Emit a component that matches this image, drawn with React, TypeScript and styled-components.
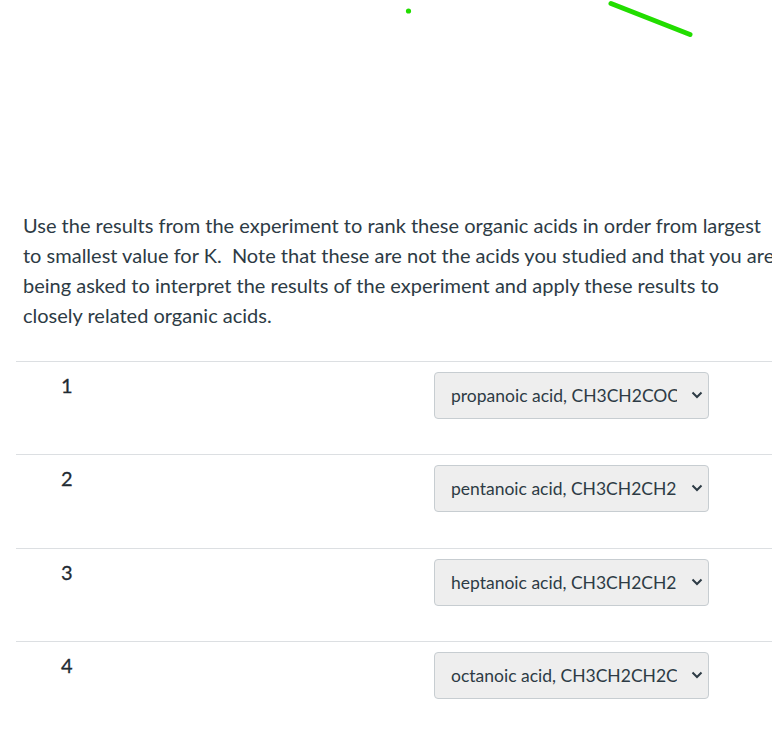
import styled, { createGlobalStyle } from "styled-components";

const GlobalStyle = createGlobalStyle`
  html, body {
    margin: 0;
    padding: 0;
    background: #ffffff;
  }
  body {
    font-family: Lato, "Open Sans", "Liberation Sans", sans-serif;
    color: #2d3b45;
  }
`;

const Page = styled.div`
  position: relative;
  width: 772px;
  height: 741px;
  overflow: hidden;
  padding-top: 210px;
  box-sizing: border-box;
`;

const Scribbles = styled.svg`
  position: absolute;
  left: 0;
  top: 0;
  pointer-events: none;
`;

const QuestionText = styled.p`
  margin: 0 0 31px 23px;
  width: 754px;
  font-size: 20px;
  line-height: 30px;
`;

const Answers = styled.div`
  margin-left: 16px;
`;

const AnswerRow = styled.div`
  display: flex;
  align-items: flex-start;
  border-top: 1px solid #dcdfe2;
  height: 93.3px;
  box-sizing: border-box;
  padding-top: 10px;
`;

const Rank = styled.div`
  width: 418px;
  padding-left: 45px;
  padding-top: 1px;
  box-sizing: border-box;
  font-size: 20px;
  font-weight: 400;
  line-height: 24px;
  color: #1f2b33;
  -webkit-text-stroke: 0.3px #1f2b33;
`;

const SelectWrap = styled.div`
  position: relative;
  width: 275px;
`;

const Select = styled.select`
  appearance: none;
  width: 100%;
  height: 47px;
  padding: 0 31px 0 16px;
  font-family: Lato, "Open Sans", "Liberation Sans", sans-serif;
  font-size: 17.5px;
  color: #2d3b45;
  background: #eeeeee;
  border: 1px solid #c7cdd1;
  border-radius: 4px;
  outline: none;
`;

const Chevron = styled.svg`
  position: absolute;
  right: 6px;
  top: 19px;
  pointer-events: none;
`;

const choices = [
  "propanoic acid, CH3CH2COOH",
  "pentanoic acid, CH3CH2CH2CH2COOH",
  "heptanoic acid, CH3CH2CH2CH2CH2CH2COOH",
  "octanoic acid, CH3CH2CH2CH2CH2CH2CH2COOH",
];

const App = (): JSX.Element => {
  return (
    <Page>
      <GlobalStyle />
      <Scribbles width="772" height="60" viewBox="0 0 772 60">
        <circle cx="408.5" cy="11" r="2.6" fill="#22dd00" />
        <line
          x1="611"
          y1="3.5"
          x2="690"
          y2="34.5"
          stroke="#22dd00"
          strokeWidth="5"
          strokeLinecap="round"
        />
      </Scribbles>
      <QuestionText>
        Use the results from the experiment to rank these organic acids in order from largest to
        smallest value for K.&nbsp; Note that these are not the acids you studied and that you are
        being asked to interpret the results of the experiment and apply these results to closely
        related organic acids.
      </QuestionText>
      <Answers>
        {choices.map((choice, i) => (
          <AnswerRow key={choice}>
            <Rank>{i + 1}</Rank>
            <SelectWrap>
              <Select defaultValue={choice}>
                {choices.map((c) => (
                  <option key={c} value={c}>
                    {c}
                  </option>
                ))}
              </Select>
              <Chevron width="12" height="8" viewBox="0 0 12 8">
                <path
                  d="M1.5 1.5 L6 6 L10.5 1.5"
                  fill="none"
                  stroke="#2d3b45"
                  strokeWidth="2"
                />
              </Chevron>
            </SelectWrap>
          </AnswerRow>
        ))}
      </Answers>
    </Page>
  );
};

export default App;
